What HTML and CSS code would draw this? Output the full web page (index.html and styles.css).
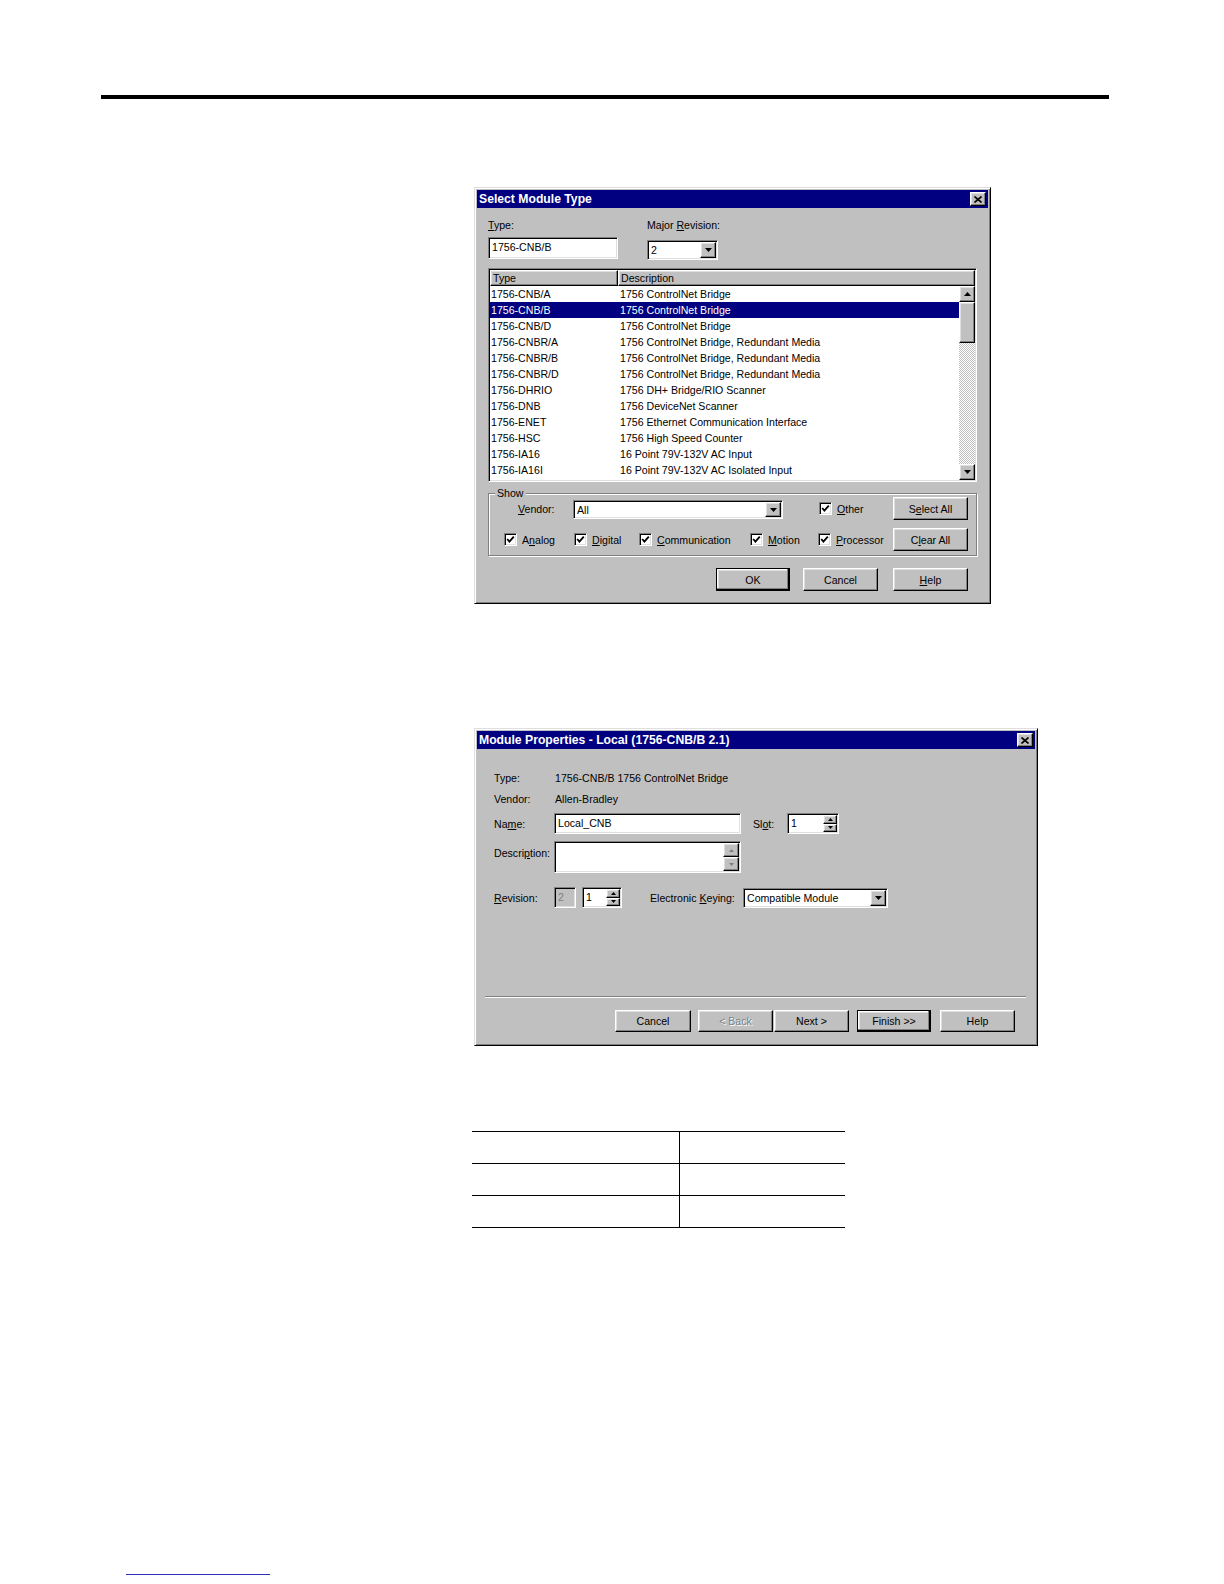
FILE: index.html
```html
<!DOCTYPE html>
<html>
<head>
<meta charset="utf-8">
<link rel="stylesheet" href="styles.css">
</head>
<body>
<div class="page">
  <div class="rule"></div>

  <div class="win fig1">
    <div class="titlebar">
      <span>Select Module Type</span>
      <span class="close raised"><svg width="8" height="7" viewBox="0 0 8 7"><path d="M0.5 0.5 L7.5 6.5 M7.5 0.5 L0.5 6.5" stroke="#000" stroke-width="1.6"/></svg></span>
    </div>
    <div class="d1body">
      <div class="d1top">
        <div class="col1">
          <div class="lbl"><u>T</u>ype:</div>
          <div class="sunken field typefield">1756-CNB/B</div>
        </div>
        <div class="col2">
          <div class="lbl">Major <u>R</u>evision:</div>
          <div class="sunken combo revcombo"><span class="ctext">2</span><span class="raised dd"><svg width="7" height="4" viewBox="0 0 7 4"><polygon points="0,0 7,0 3.5,4" fill="#000"/></svg></span></div>
        </div>
      </div>

      <div class="sunken list">
        <div class="lhead">
          <div class="raised hc1">Type</div>
          <div class="raised hc2">Description</div>
        </div>
        <div class="lbody">
          <div class="rows">
            <div class="row"><span class="c1">1756-CNB/A</span><span class="c2">1756 ControlNet Bridge</span></div>
            <div class="row sel"><span class="c1">1756-CNB/B</span><span class="c2">1756 ControlNet Bridge</span></div>
            <div class="row"><span class="c1">1756-CNB/D</span><span class="c2">1756 ControlNet Bridge</span></div>
            <div class="row"><span class="c1">1756-CNBR/A</span><span class="c2">1756 ControlNet Bridge, Redundant Media</span></div>
            <div class="row"><span class="c1">1756-CNBR/B</span><span class="c2">1756 ControlNet Bridge, Redundant Media</span></div>
            <div class="row"><span class="c1">1756-CNBR/D</span><span class="c2">1756 ControlNet Bridge, Redundant Media</span></div>
            <div class="row"><span class="c1">1756-DHRIO</span><span class="c2">1756 DH+ Bridge/RIO Scanner</span></div>
            <div class="row"><span class="c1">1756-DNB</span><span class="c2">1756 DeviceNet Scanner</span></div>
            <div class="row"><span class="c1">1756-ENET</span><span class="c2">1756 Ethernet Communication Interface</span></div>
            <div class="row"><span class="c1">1756-HSC</span><span class="c2">1756 High Speed Counter</span></div>
            <div class="row"><span class="c1">1756-IA16</span><span class="c2">16 Point 79V-132V AC Input</span></div>
            <div class="row"><span class="c1">1756-IA16I</span><span class="c2">16 Point 79V-132V AC Isolated Input</span></div>
          </div>
          <div class="sb">
            <div class="raised sbbtn"><svg width="7" height="4" viewBox="0 0 7 4"><polygon points="0,4 7,4 3.5,0" fill="#000"/></svg></div>
            <div class="raised sbthumb"></div>
            <div class="sbtrack"></div>
            <div class="raised sbbtn"><svg width="7" height="4" viewBox="0 0 7 4"><polygon points="0,0 7,0 3.5,4" fill="#000"/></svg></div>
          </div>
        </div>
      </div>

      <fieldset class="group">
        <legend>Show</legend>
        <div class="grow1">
          <span class="vlbl"><u>V</u>endor:</span>
          <div class="sunken combo vcombo"><span class="ctext">All</span><span class="raised dd"><svg width="7" height="4" viewBox="0 0 7 4"><polygon points="0,0 7,0 3.5,4" fill="#000"/></svg></span></div>
          <span class="chk w-other"><span class="box"><svg width="9" height="9" viewBox="0 0 9 9"><polyline points="1.2,4 3.4,6.6 7.8,1.6" fill="none" stroke="#000" stroke-width="1.8"/></svg></span><span><u>O</u>ther</span></span>
          <div class="raised btn">S<u>e</u>lect All</div>
        </div>
        <div class="grow2">
          <span class="chk w-analog"><span class="box"><svg width="9" height="9" viewBox="0 0 9 9"><polyline points="1.2,4 3.4,6.6 7.8,1.6" fill="none" stroke="#000" stroke-width="1.8"/></svg></span><span>A<u>n</u>alog</span></span>
          <span class="chk w-digital"><span class="box"><svg width="9" height="9" viewBox="0 0 9 9"><polyline points="1.2,4 3.4,6.6 7.8,1.6" fill="none" stroke="#000" stroke-width="1.8"/></svg></span><span><u>D</u>igital</span></span>
          <span class="chk w-comm"><span class="box"><svg width="9" height="9" viewBox="0 0 9 9"><polyline points="1.2,4 3.4,6.6 7.8,1.6" fill="none" stroke="#000" stroke-width="1.8"/></svg></span><span><u>C</u>ommunication</span></span>
          <span class="chk w-motion"><span class="box"><svg width="9" height="9" viewBox="0 0 9 9"><polyline points="1.2,4 3.4,6.6 7.8,1.6" fill="none" stroke="#000" stroke-width="1.8"/></svg></span><span><u>M</u>otion</span></span>
          <span class="chk w-proc"><span class="box"><svg width="9" height="9" viewBox="0 0 9 9"><polyline points="1.2,4 3.4,6.6 7.8,1.6" fill="none" stroke="#000" stroke-width="1.8"/></svg></span><span><u>P</u>rocessor</span></span>
          <div class="raised btn">C<u>l</u>ear All</div>
        </div>
      </fieldset>

      <div class="d1btns">
        <div class="btn default b-ok">OK</div>
        <div class="raised btn b-cancel">Cancel</div>
        <div class="raised btn b-help"><u>H</u>elp</div>
      </div>
    </div>
  </div>

  <div class="win fig2">
    <div class="titlebar">
      <span>Module Properties - Local (1756-CNB/B 2.1)</span>
      <span class="close raised"><svg width="8" height="7" viewBox="0 0 8 7"><path d="M0.5 0.5 L7.5 6.5 M7.5 0.5 L0.5 6.5" stroke="#000" stroke-width="1.6"/></svg></span>
    </div>
    <div class="d2body">
      <div class="prow r-type"><span class="plbl">Type:</span><span class="pval">1756-CNB/B 1756 ControlNet Bridge</span></div>
      <div class="prow r-vendor"><span class="plbl">Vendor:</span><span class="pval">Allen-Bradley</span></div>
      <div class="prow r-name">
        <span class="plbl">Na<u>m</u>e:</span>
        <div class="sunken field namefield">Local_CNB</div>
        <span class="slbl">Sl<u>o</u>t:</span>
        <div class="sunken spin slotspin"><span class="ctext">1</span><span class="spinbtns"><span class="raised sp"><svg width="5" height="3" viewBox="0 0 5 3"><polygon points="0,3 5,3 2.5,0" fill="#000"/></svg></span><span class="raised sp"><svg width="5" height="3" viewBox="0 0 5 3"><polygon points="0,0 5,0 2.5,3" fill="#000"/></svg></span></span></div>
      </div>
      <div class="prow r-desc">
        <span class="plbl dlbl">Descri<u>p</u>tion:</span>
        <div class="sunken desc"><span class="dtext"></span><span class="dscroll"><span class="raised dsb"><svg width="5" height="3" viewBox="0 0 5 3"><polygon points="0,3 5,3 2.5,0" fill="#808080"/></svg></span><span class="raised dsb"><svg width="5" height="3" viewBox="0 0 5 3"><polygon points="0,0 5,0 2.5,3" fill="#808080"/></svg></span></span></div>
      </div>
      <div class="prow r-rev">
        <span class="plbl"><u>R</u>evision:</span>
        <div class="sunken disbox">2</div>
        <div class="sunken spin revspin"><span class="ctext">1</span><span class="spinbtns"><span class="raised sp"><svg width="5" height="3" viewBox="0 0 5 3"><polygon points="0,3 5,3 2.5,0" fill="#000"/></svg></span><span class="raised sp"><svg width="5" height="3" viewBox="0 0 5 3"><polygon points="0,0 5,0 2.5,3" fill="#000"/></svg></span></span></div>
        <span class="klbl">Electronic <u>K</u>eying:</span>
        <div class="sunken combo kcombo"><span class="ctext">Compatible Module</span><span class="raised dd"><svg width="7" height="4" viewBox="0 0 7 4"><polygon points="0,0 7,0 3.5,4" fill="#000"/></svg></span></div>
      </div>
    </div>
    <div class="sep"></div>
    <div class="d2btns">
      <div class="raised btn b-cancel2">Cancel</div>
      <div class="raised btn dis b-back">&lt; Back</div>
      <div class="raised btn b-next">Next &gt;</div>
      <div class="btn default b-finish">Finish &gt;&gt;</div>
      <div class="raised btn b-help2">Help</div>
    </div>
  </div>

  <div class="tbl">
    <div class="tc left"></div><div class="tc"></div>
    <div class="tc left"></div><div class="tc"></div>
    <div class="tc left"></div><div class="tc"></div>
  </div>

  <div class="foot"></div>
</div>
</body>
</html>
```

FILE: styles.css
```css
* { box-sizing: border-box; }
body { margin: 0; background: #fff; }
.page {
  width: 1224px;
  height: 1584px;
  overflow: hidden;
  background: #fff;
  font-family: "Liberation Sans", Arial, sans-serif;
  font-size: 10.6px;
  color: #000;
  padding-top: 95px;
}
.rule { margin-left: 101px; width: 1008px; height: 4px; background: #000; }

.win {
  background: #c0c0c0;
  border: 1px solid;
  border-color: #dfdfdf #000 #000 #dfdfdf;
  box-shadow: inset 1px 1px #fff, inset -1px -1px #808080;
  padding: 2px;
  margin-left: 474px;
}
.fig1 { margin-top: 88px; width: 517px; height: 417px; }
.fig2 { margin-top: 124px; width: 564px; height: 318px; }

.titlebar {
  height: 18px;
  background: #000080;
  color: #fff;
  font-weight: bold;
  font-size: 12.2px;
  display: flex;
  align-items: center;
  justify-content: space-between;
  padding: 0 2px 0 2px;
  white-space: nowrap;
}
.raised {
  border: 1px solid;
  border-color: #fff #000 #000 #fff;
  box-shadow: inset -1px -1px #808080, inset 1px 1px #dfdfdf;
  background: #c0c0c0;
}
.sunken {
  border: 1px solid;
  border-color: #808080 #fff #fff #808080;
  box-shadow: inset 1px 1px #000, inset -1px -1px #dfdfdf;
  background: #fff;
}
.close {
  width: 16px; height: 14px;
  display: flex; align-items: center; justify-content: center;
}
.close svg { display: block; }

/* dialog 1 */
.d1body { padding: 11px 11px 0 11px; }
.d1top { display: flex; height: 41px; }
.col1 { width: 159px; }
.lbl { line-height: 13px; height: 13px; white-space: nowrap; }
.field {
  padding: 2px 3px;
  line-height: 14px;
  white-space: nowrap;
  overflow: hidden;
}
.typefield { width: 130px; height: 22px; margin-top: 5px; }
.combo { display: flex; padding: 1px; }
.ctext { flex: 1; padding: 1px 0 0 2px; line-height: 14px; white-space: nowrap; overflow: hidden; }
.dd {
  width: 16px;
  display: flex; align-items: center; justify-content: center;
}
.dd svg, .sbbtn svg, .sp svg, .dsb svg { display: block; }
.revcombo { width: 71px; height: 20px; margin-top: 8px; }

.list {
  width: 489px;
  height: 214px;
  margin-top: 8px;
  padding: 1px;
  display: flex;
  flex-direction: column;
  overflow: hidden;
}
.lhead { display: flex; height: 16px; flex: none; }
.hc1 { width: 128px; padding-left: 2px; line-height: 14px; }
.hc2 { flex: 1; padding-left: 2px; line-height: 14px; }
.lbody { display: flex; flex: 1; min-height: 0; }
.rows { flex: 1; background: #fff; overflow: hidden; }
.row { display: flex; height: 16px; line-height: 16px; white-space: nowrap; }
.row .c1 { width: 128px; padding-left: 1px; }
.row .c2 { padding-left: 2px; }
.row.sel { background: #000080; color: #fff; }
.sb { width: 16px; display: flex; flex-direction: column; }
.sbbtn { height: 16px; display: flex; align-items: center; justify-content: center; flex: none; }
.sbthumb { height: 41px; flex: none; }
.sbtrack {
  flex: 1;
  background-image: repeating-conic-gradient(#fff 0 25%, #c0c0c0 0 50%);
  background-size: 2px 2px;
}

.group {
  margin: 5px 0 0 0;
  padding: 0 0 4px 0;
  width: 489px;
  border: 1px solid #808080;
  box-shadow: inset 1px 1px #fff, 1px 1px #fff;
  min-inline-size: 0;
}
.group legend {
  margin-left: 6px;
  padding: 0 2px;
  line-height: 13px;
  background: #c0c0c0;
}
.grow1 { display: flex; align-items: center; height: 23px; margin-top: -3px; }
.grow2 { display: flex; align-items: center; height: 23px; margin-top: 8px; }
.vlbl { margin-left: 29px; width: 55px; white-space: nowrap; }
.vcombo { width: 210px; height: 19px; margin-top: 2px; }
.chk { display: flex; align-items: center; white-space: nowrap; }
.chk .box {
  width: 13px; height: 13px;
  border: 1px solid;
  border-color: #808080 #fff #fff #808080;
  box-shadow: inset 1px 1px #000, inset -1px -1px #dfdfdf;
  background: #fff;
  display: flex; align-items: center; justify-content: center;
  margin-right: 5px;
  flex: none;
}
.chk .box svg { display: block; }
.w-other { margin-left: 36px; width: 74px; }
.w-analog { margin-left: 15px; width: 70px; }
.w-digital { width: 65px; }
.w-comm { width: 111px; }
.w-motion { width: 68px; }
.w-proc { width: 75px; }
.btn {
  width: 75px;
  height: 23px;
  display: flex; align-items: center; justify-content: center;
  white-space: nowrap;
  flex: none;
}
.btn.default {
  border: 1px solid #000;
  background: #c0c0c0;
  box-shadow: inset -1px -1px #000, inset -2px -2px #808080, inset 1px 1px #fff, inset 2px 2px #dfdfdf;
}
.d1btns { display: flex; margin-top: 12px; padding-left: 228px; }
.d1btns .btn { height: 23px; }
.b-ok { width: 74px; }
.b-cancel { margin-left: 13px; }
.b-help { margin-left: 15px; }

/* dialog 2 */
.d2body { padding-left: 17px; }
.prow { display: flex; align-items: center; white-space: nowrap; }
.plbl { width: 60px; }
.pval { padding-left: 1px; }
.r-type { margin-top: 19px; height: 20px; }
.r-vendor { margin-top: 1px; height: 20px; }
.r-name { margin-top: 4px; height: 21px; }
.namefield { width: 187px; height: 21px; }
.slbl { margin-left: 12px; width: 34px; }
.spin { display: flex; padding: 1px; height: 21px; }
.slotspin { width: 52px; }
.spinbtns { width: 14px; display: flex; flex-direction: column; }
.sp { flex: 1; display: flex; align-items: center; justify-content: center; }
.r-desc { margin-top: 7px; height: 32px; align-items: flex-start; }
.dlbl { margin-top: 6px; }
.desc { width: 187px; height: 32px; display: flex; padding: 1px; }
.dtext { flex: 1; }
.dscroll { width: 16px; display: flex; flex-direction: column; }
.dsb { flex: 1; display: flex; align-items: center; justify-content: center; }
.r-rev { margin-top: 14px; height: 21px; }
.disbox {
  width: 22px; height: 21px;
  background: #c0c0c0;
  color: #808080;
  padding: 2px 0 0 3px;
  line-height: 14px;
}
.revspin { width: 40px; margin-left: 6px; }
.klbl { margin-left: 28px; width: 93px; }
.kcombo { width: 145px; height: 20px; }
.sep {
  margin: 88px 9px 0 8px;
  height: 2px;
  border-top: 1px solid #808080;
  border-bottom: 1px solid #fff;
}
.d2btns { display: flex; margin-top: 12px; padding-left: 138px; }
.d2btns .btn { height: 22px; }
.b-cancel2 { width: 76px; }
.b-back { margin-left: 7px; }
.dis { color: #808080; text-shadow: 1px 1px #fff; }
.b-next { margin-left: 1px; }
.b-finish { margin-left: 8px; width: 74px; }
.b-help2 { margin-left: 9px; }

/* table */
.tbl {
  margin: 85px 0 0 472px;
  width: 373px;
  display: grid;
  grid-template-columns: 208px 165px;
  border-bottom: 1px solid #000;
}
.tc { height: 32px; border-top: 1px solid #000; }
.tc.left { border-right: 1px solid #000; }

.foot {
  margin: 346px 0 0 126px;
  width: 144px;
  height: 1px;
  background: #3030c0;
}
```
